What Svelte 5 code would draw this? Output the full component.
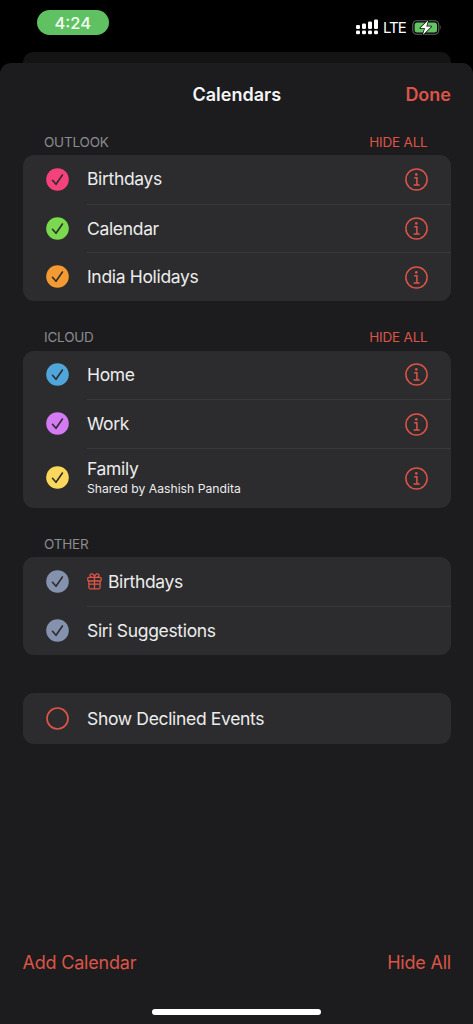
<script>
  const accent = "#dd5446"

  let sections = [
    {
      title: "Outlook",
      canHide: true,
      calendars: [
        { name: "Birthdays", color: "#f5427c", info: true },
        { name: "Calendar", color: "#7bd950", info: true },
        { name: "India Holidays", color: "#f39a32", info: true },
      ],
    },
    {
      title: "iCloud",
      canHide: true,
      calendars: [
        { name: "Home", color: "#50a5da", info: true },
        { name: "Work", color: "#d47af3", info: true },
        {
          name: "Family",
          note: "Shared by Aashish Pandita",
          color: "#fbd75b",
          info: true,
        },
      ],
    },
    {
      title: "Other",
      canHide: false,
      calendars: [
        { name: "Birthdays", color: "#8592ae", gift: true },
        { name: "Siri Suggestions", color: "#8592ae" },
      ],
    },
  ]

  const signalBars = [4, 5.5, 7.5, 9.5]
</script>

<div class="screen">
  <div class="status-bar">
    <span class="time">4:24</span>
    <div class="status-icons">
      <svg class="signal" width="23" height="16" viewBox="0 0 23 16">
        {#each signalBars as height, i}
          <rect x={i * 6} y={10 - height} width="4" {height} rx="1.3" />
          <rect x={i * 6} y="11.4" width="4" height="3.9" rx="1.3" />
        {/each}
      </svg>
      <span class="network">LTE</span>
      <svg class="battery" width="31" height="17" viewBox="0 0 31 17">
        <rect x="0.8" y="1.7" width="26" height="13.6" rx="4" fill="none" stroke="#626562" stroke-width="1.1" />
        <rect x="2.6" y="3.4" width="22.4" height="10.2" rx="2.5" fill="#62c462" />
        <path d="M28.4 6.1 q1.8 2.4 0 4.8z" fill="#626562" />
        <path
          d="M16.3 0.9 L8.2 9.3 H13 L10.8 16 L19.2 7.5 H14.3z"
          fill="#fff"
          stroke="#000"
          stroke-width="1.3"
          stroke-linejoin="round"
          paint-order="stroke"
        />
      </svg>
    </div>
  </div>
  <div class="back-sheet"></div>

  <div class="sheet">
    <header>
      <h1>Calendars</h1>
      <button class="done">Done</button>
    </header>

    {#each sections as section}
      <div class="section-header">
        <span>{section.title}</span>
        {#if section.canHide}
          <button class="hide-section">Hide All</button>
        {/if}
      </div>
      <div class="group">
        {#each section.calendars as calendar}
          <div class="row" class:tall={calendar.note}>
            <svg class="check" width="23" height="23" viewBox="0 0 23 23">
              <circle cx="11.5" cy="11.5" r="11.3" fill={calendar.color} />
              <path d="M6.5 12.3 L10 16.3 L16.4 7" />
            </svg>
            <div class="row-content">
              <div class="label">
                <div class="name">
                  {#if calendar.gift}
                    <svg class="gift" width="15" height="17" viewBox="0 0 15 17">
                      <rect x="0.8" y="4.3" width="13.4" height="3.7" rx="1" />
                      <path d="M1.9 8 V14.2 Q1.9 15.8 3.5 15.8 H11.5 Q13.1 15.8 13.1 14.2 V8 M7.5 4.3 V15.8 M1.9 11.2 H13.1" />
                      <path d="M7.5 4.2 C6.9 0.2 2.7 0.1 3 2.7 Q3.2 4.2 5 4.2 M7.5 4.2 C8.1 0.2 12.3 0.1 12 2.7 Q11.8 4.2 10 4.2" />
                    </svg>
                  {/if}
                  <span>{calendar.name}</span>
                </div>
                {#if calendar.note}
                  <div class="note">{calendar.note}</div>
                {/if}
              </div>
              {#if calendar.info}
                <svg class="info" width="23" height="23" viewBox="0 0 23 23">
                  <circle cx="11.5" cy="11.5" r="10.6" stroke={accent} />
                  <circle cx="11.3" cy="6.4" r="1.3" class="dot" />
                  <path d="M9.2 9.8 H11.9 V16.7 M8.7 16.9 H14.7" stroke={accent} />
                </svg>
              {/if}
            </div>
          </div>
        {/each}
      </div>
    {/each}

    <div class="group declined">
      <div class="row">
        <svg width="23" height="23" viewBox="0 0 23 23">
          <circle cx="11.5" cy="11.5" r="10.5" fill="none" stroke={accent} stroke-width="1.7" />
        </svg>
        <div class="row-content">
          <div class="label">
            <div class="name">Show Declined Events</div>
          </div>
        </div>
      </div>
    </div>

    <footer>
      <button>Add Calendar</button>
      <button>Hide All</button>
    </footer>
    <div class="home-indicator"></div>
  </div>
</div>

<style>
  :global(body) {
    background: #000;
  }

  .screen {
    display: flex;
    flex-direction: column;
    width: 473px;
    height: 1024px;
    overflow: hidden;
    background: #000;
    font-family: Inter, "Liberation Sans", sans-serif;
    color: #ececed;
  }

  button {
    padding: 0;
    border: none;
    background: none;
    font: inherit;
    letter-spacing: inherit;
    color: #dd5446;
  }

  svg {
    display: block;
    flex: none;
  }

  .status-bar {
    display: flex;
    justify-content: space-between;
    height: 42px;
    padding: 10px 30px 0 37px;
    box-sizing: border-box;
  }

  .time {
    width: 71.5px;
    height: 25px;
    border-radius: 13px;
    background: #5fc162;
    color: #f3fff3;
    font-size: 16.5px;
    font-weight: 500;
    line-height: 26px;
    text-align: center;
  }

  .status-icons {
    display: flex;
    align-items: center;
    height: 34px;
  }

  .signal {
    fill: #fff;
  }

  .network {
    margin: 2px 6px 0 4px;
    font-size: 15px;
    line-height: 18px;
    letter-spacing: -0.9px;
    color: #fff;
  }

  .back-sheet {
    flex: none;
    height: 11px;
    margin: 10px 22.5px 0;
    border-radius: 10px 10px 0 0;
    background: #141414;
  }

  .sheet {
    display: flex;
    flex: 1;
    flex-direction: column;
    padding: 0 22px 0 22.5px;
    border-radius: 11px 11px 0 0;
    background: #1c1c1e;
  }

  header {
    display: grid;
    grid-template-columns: 1fr auto 1fr;
    align-items: center;
    height: 63px;
  }

  h1 {
    grid-column: 2;
    margin: 0;
    font-size: 18px;
    font-weight: 600;
    color: #f5f5f6;
  }

  .done {
    justify-self: end;
    font-size: 18px;
    font-weight: 600;
  }

  .section-header {
    display: flex;
    justify-content: space-between;
    height: 49.5px;
    padding: 0 23.5px 0 21.5px;
    box-sizing: border-box;
    font-size: 13.5px;
    line-height: 73px;
    letter-spacing: -0.2px;
    text-transform: uppercase;
    color: #8b8b90;
  }

  .section-header button {
    text-transform: uppercase;
  }

  header + .section-header {
    height: 29px;
    line-height: 32px;
  }

  .group {
    border-radius: 11px;
    background: #2c2c2e;
    overflow: hidden;
  }

  .row {
    display: flex;
    align-items: center;
    gap: 18.5px;
    height: 48.7px;
    padding-left: 23px;
  }

  .row.tall {
    height: 60px;
  }

  .row-content {
    display: flex;
    flex: 1;
    align-items: center;
    justify-content: space-between;
    height: 100%;
    padding-right: 23.5px;
    box-sizing: border-box;
  }

  .row + .row .row-content {
    border-top: 1px solid #39393b;
  }

  .check path {
    fill: none;
    stroke: #2c2c2e;
    stroke-width: 1.6;
    stroke-linecap: round;
    stroke-linejoin: round;
  }

  .name {
    display: flex;
    align-items: center;
    gap: 6px;
    font-size: 17.5px;
    line-height: 22px;
    letter-spacing: -0.33px;
  }

  .note {
    font-size: 12.2px;
    line-height: 17px;
    margin-bottom: 1px;
  }

  .gift {
    fill: none;
    stroke: #dd5446;
    stroke-width: 1.3;
  }

  .info {
    fill: none;
    stroke-width: 1.5;
  }

  .info .dot {
    fill: #dd5446;
  }

  .declined {
    margin-top: 38.5px;
  }

  .declined .row {
    height: 51px;
  }

  footer {
    display: flex;
    justify-content: space-between;
    margin-top: auto;
    font-size: 18px;
    line-height: 24px;
    letter-spacing: -0.2px;
  }

  .home-indicator {
    align-self: center;
    width: 169px;
    height: 6px;
    margin: 34px 0 9px;
    border-radius: 3px;
    background: #fff;
  }
</style>
